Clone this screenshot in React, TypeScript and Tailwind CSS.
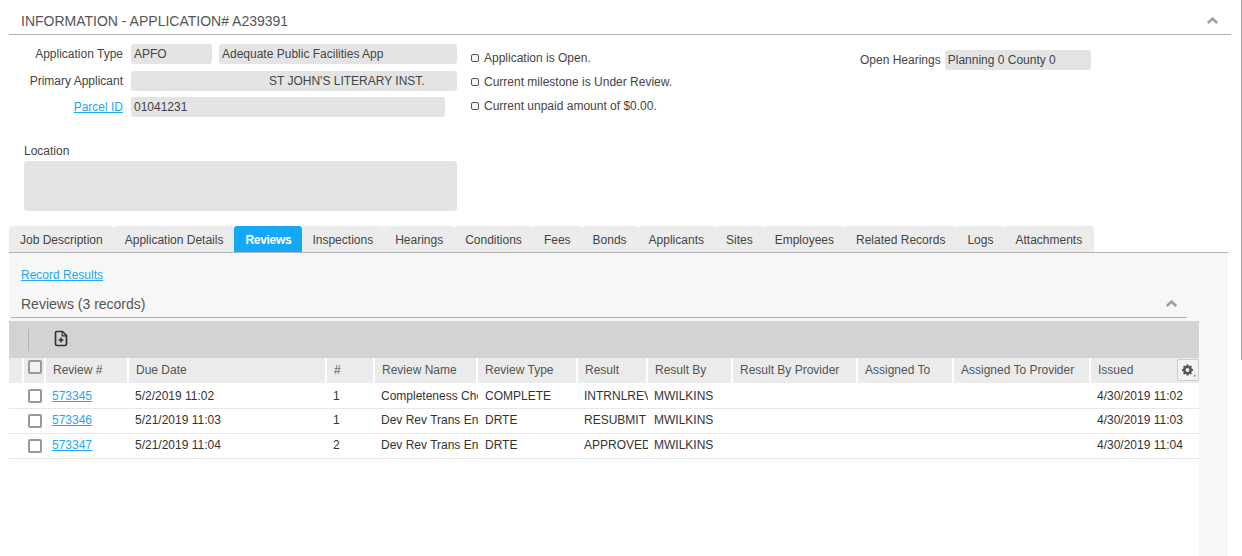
import React from "react";

const tabs = ["Job Description","Application Details","Reviews","Inspections","Hearings","Conditions","Fees","Bonds","Applicants","Sites","Employees","Related Records","Logs","Attachments"];
const gridCols = "grid grid-cols-[15px_22px_83px_198px_48px_103px_100px_70px_85px_125px_96px_137px_109px]";
const headers: string[] = ["Review #","Due Date","#","Review Name","Review Type","Result","Result By","Result By Provider","Assigned To","Assigned To Provider","Issued"];
const rows = [
  ["573345","5/2/2019 11:02","1","Completeness Check","COMPLETE","INTRNLREVIEW","MWILKINS","4/30/2019 11:02"],
  ["573346","5/21/2019 11:03","1","Dev Rev Trans Engineering","DRTE","RESUBMIT","MWILKINS","4/30/2019 11:03"],
  ["573347","5/21/2019 11:04","2","Dev Rev Trans Engineering","DRTE","APPROVED","MWILKINS","4/30/2019 11:04"],
];

function Chevron({ className }: { className: string }) {
  return (
    <svg className={className} width="11" height="7" viewBox="0 0 11 7" fill="none">
      <path d="M0.8 6 L5.5 1.6 L10.2 6" stroke="#a0a0a0" strokeWidth="2.6" />
    </svg>
  );
}

function Field({ className, children }: { className: string; children?: React.ReactNode }) {
  return <div className={`h-5 rounded-[3px] bg-[#e4e4e4] pl-[3px] leading-[21px] whitespace-pre overflow-hidden ${className}`}>{children}</div>;
}

function Bullet({ children }: { children: React.ReactNode }) {
  return (
    <div className="flex h-6 items-center gap-[5px]">
      <span className="h-[8px] w-[8px] rounded-[2px] border border-[#555] bg-[#f4f4f4]" />
      <span>{children}</span>
    </div>
  );
}

function Cell({ children, className = "" }: { children?: React.ReactNode; className?: string }) {
  return <div className={`overflow-hidden whitespace-nowrap ${className}`}>{children}</div>;
}

export default function App() {
  return (
    <div className="relative h-[556px] w-[1242px] overflow-hidden bg-white font-['Liberation_Sans',Arial,sans-serif] text-[12px] text-[#444]">
      <div className="absolute right-0 top-0 h-[360px] w-px bg-[#a8a8a8]" />
      <div className="ml-[9px] mr-[11px] flex h-[35px] items-center justify-between border-b border-[#b2b2b2] pl-[12px] pr-[13px]">
        <span className="pt-[7px] text-[14px] leading-[14px] text-[#555]">INFORMATION - APPLICATION# A239391</span>
        <Chevron className="mt-[6px]" />
      </div>

      <div className="flex h-[191px]">
        <div className="ml-[24px] flex w-[433px] flex-col">
          <div className="mt-[9px] flex items-center">
            <span className="w-[99px] text-right">Application Type</span>
            <Field className="ml-[8px] w-[81px]">APFO</Field>
            <Field className="ml-[7px] w-[238px]">Adequate Public Facilities App</Field>
          </div>
          <div className="mt-[7px] flex items-center">
            <span className="w-[99px] text-right">Primary Applicant</span>
            <Field className="ml-[8px] w-[326px] pl-[138px]">ST JOHN'S LITERARY INST.</Field>
          </div>
          <div className="mt-[6px] flex items-center">
            <a className="w-[99px] text-right text-[#1da7f5] underline">Parcel ID</a>
            <Field className="ml-[8px] w-[314px]">01041231</Field>
          </div>
          <div className="mt-[27px] leading-[14px]">Location</div>
          <div className="mt-[3px] h-[50px] rounded-[3px] bg-[#e4e4e4]" />
        </div>
        <div className="ml-[14px] mt-[11px] w-[389px]">
          <Bullet>Application is Open.</Bullet>
          <Bullet>Current milestone is Under Review.</Bullet>
          <Bullet>Current unpaid amount of $0.00.</Bullet>
        </div>
        <div className="mt-[15px] flex h-5 items-center">
          <span>Open Hearings</span>
          <Field className="ml-[4px] w-[146px]">Planning 0 County 0</Field>
        </div>
      </div>

      <div className="ml-[9px] mr-[14px]">
        <div className="flex h-[27px] border-b border-[#b2b2b2]">
          {tabs.map((t, i) => (
            <div
              key={t}
              className={`flex items-center rounded-t-[3px] pt-[2px] ${i === 2 ? "w-[68px] justify-center bg-[#16a8f8] font-bold tracking-[-0.3px] text-white" : i === 3 ? "bg-[#ececec] pl-[10px] pr-[11px]" : i === 13 ? "bg-[#ececec] pl-[11px] pr-[12px]" : "bg-[#ececec] px-[11px]"}`}
            >
              {t}
            </div>
          ))}
        </div>

        <div className="h-[303px] bg-[#f7f7f7]">
          <div className="w-[1190px]">
            <div className="pl-[12px] pt-[15px] leading-[14px]">
              <a className="text-[#1da7f5] underline">Record Results</a>
            </div>
            <div className="ml-[2px] mr-[12px] mt-[9px] flex h-[27px] items-center justify-between border-b border-[#b2b2b2] pl-[10px] pr-[10px]">
              <span className="pt-[1px] text-[14px] text-[#555]">Reviews (3 records)</span>
              <Chevron className="mb-[1px]" />
            </div>
            <div className="mt-[3px] flex h-[37px] items-center bg-[#d3d3d3]">
              <span className="ml-[19px] h-[22px] w-px bg-[#b4b4b4]" />
              <svg className="mb-[2px] ml-[24px]" width="16" height="17" viewBox="0 0 16 17" fill="none">
                <path d="M2.5 2.8 Q2.5 1.5 3.8 1.5 H9.5 L13.5 5.5 V14 Q13.5 15.5 12 15.5 H4 Q2.5 15.5 2.5 14 Z" stroke="#333" strokeWidth="1.7" />
                <path d="M9.2 1.5 V5.8 H13.5" stroke="#333" strokeWidth="1.2" />
                <path d="M8 7.5 V12.5 M5.5 10 H10.5" stroke="#333" strokeWidth="1.6" />
              </svg>
            </div>

            <div className="relative h-[25px] bg-[#ebebeb]">
              <div className={`${gridCols} h-full`}>
                <div className="border-r-2 border-white" />
                <div className="relative border-r-2 border-white">
                  <span className="absolute left-[4px] top-[2px] h-[14px] w-[14px] rounded-[2px] border-2 border-[#999] bg-[#f2f2f2]" />
                </div>
                {headers.map((h, i) => (
                  <Cell key={h} className={`pl-[7px] leading-[25px] text-[#555] ${i < 10 ? "border-r-2 border-white" : ""}`}>{h}</Cell>
                ))}
              </div>
              <div className="absolute right-0 top-px flex h-[22px] w-[22px] items-center justify-center rounded-[2px] border border-[#ccc] bg-[#f2f2f2]">
                <svg width="16" height="14" viewBox="0 0 16 14">
                  <circle cx="7.5" cy="7" r="3.2" fill="none" stroke="#555" strokeWidth="2.6" />
                  <path d="M7.5 1.5 V3.5 M7.5 10.5 V12.5 M2 7 H4 M11 7 H13 M3.6 3.1 L5 4.5 M10 9.5 L11.4 10.9 M3.6 10.9 L5 9.5 M10 4.5 L11.4 3.1" stroke="#555" strokeWidth="1.9" />
                  <path d="M15.5 11 V13.5 H13 Z" fill="#888" />
                </svg>
              </div>
            </div>

            <div className="bg-white text-[#333]">
              {rows.map((r, i) => (
                <div key={r[0]} className={`${gridCols} ${i === 0 ? "h-[26px]" : "h-[25px] pb-[2px]"} items-center border-b border-[#e8e8e8]`}>
                  <div />
                  <div className={`pl-[4px] ${i === 0 ? "pt-px" : "pt-[2px]"}`}>
                    <span className="block h-[14px] w-[14px] rounded-[2px] border-2 border-[#999] bg-white" />
                  </div>
                  <Cell className="pl-[6px]"><a className="text-[#1da7f5] underline">{r[0]}</a></Cell>
                  <Cell className="pl-[6px]">{r[1]}</Cell>
                  <Cell className="pl-[6px]">{r[2]}</Cell>
                  <Cell className="pl-[6px] pr-[2px]">{r[3]}</Cell>
                  <Cell className="pl-[7px]">{r[4]}</Cell>
                  <Cell className="pl-[6px]">{r[5]}</Cell>
                  <Cell className="pl-[6px]">{r[6]}</Cell>
                  <Cell />
                  <Cell />
                  <Cell />
                  <Cell className="pl-[6px]">{r[7]}</Cell>
                </div>
              ))}
              <div className="h-[97px]" />
            </div>
          </div>
        </div>
      </div>
    </div>
  );
}
